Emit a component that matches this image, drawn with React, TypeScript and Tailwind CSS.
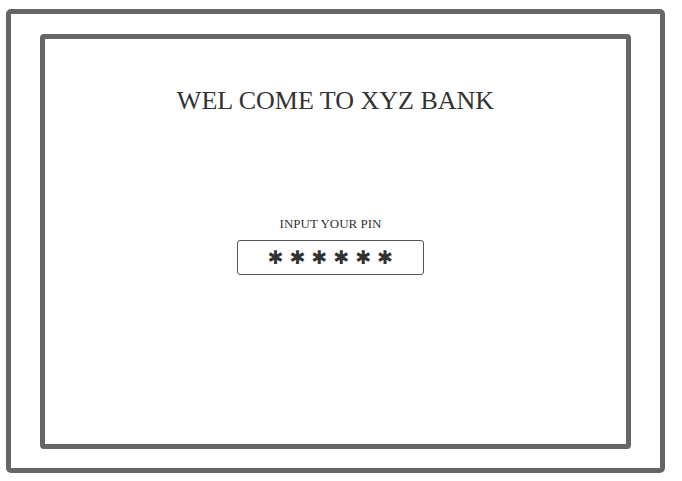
export default function App() {
  return (
    <main className="h-[481px] w-[682px] bg-white pl-[6px] pt-[9px] font-['Liberation_Serif',serif] text-[#333]">
      <div className="flex h-[464px] w-[659px] rounded-[5px] border-[5px] border-[#666] px-[29px] pb-[19px] pt-[20px]">
        <div className="flex flex-1 flex-col items-center rounded-[4px] border-[5px] border-[#666]">
          <h1 className="mt-[49px] text-[26px] leading-none">WEL COME TO XYZ BANK</h1>

          <div className="mr-[10px] mt-[103px] flex flex-col items-center">
            <p className="text-[13px] leading-none">INPUT YOUR PIN</p>
            <div className="mt-[10px] flex h-[35px] w-[187px] items-center justify-center gap-[6px] rounded-[3px] border-[1.5px] border-[#555] font-['DejaVu_Sans',sans-serif] text-[19px] leading-none text-[#333]">
              <span>✱</span>
              <span>✱</span>
              <span>✱</span>
              <span>✱</span>
              <span>✱</span>
              <span>✱</span>
            </div>
          </div>
        </div>
      </div>
    </main>
  );
}
